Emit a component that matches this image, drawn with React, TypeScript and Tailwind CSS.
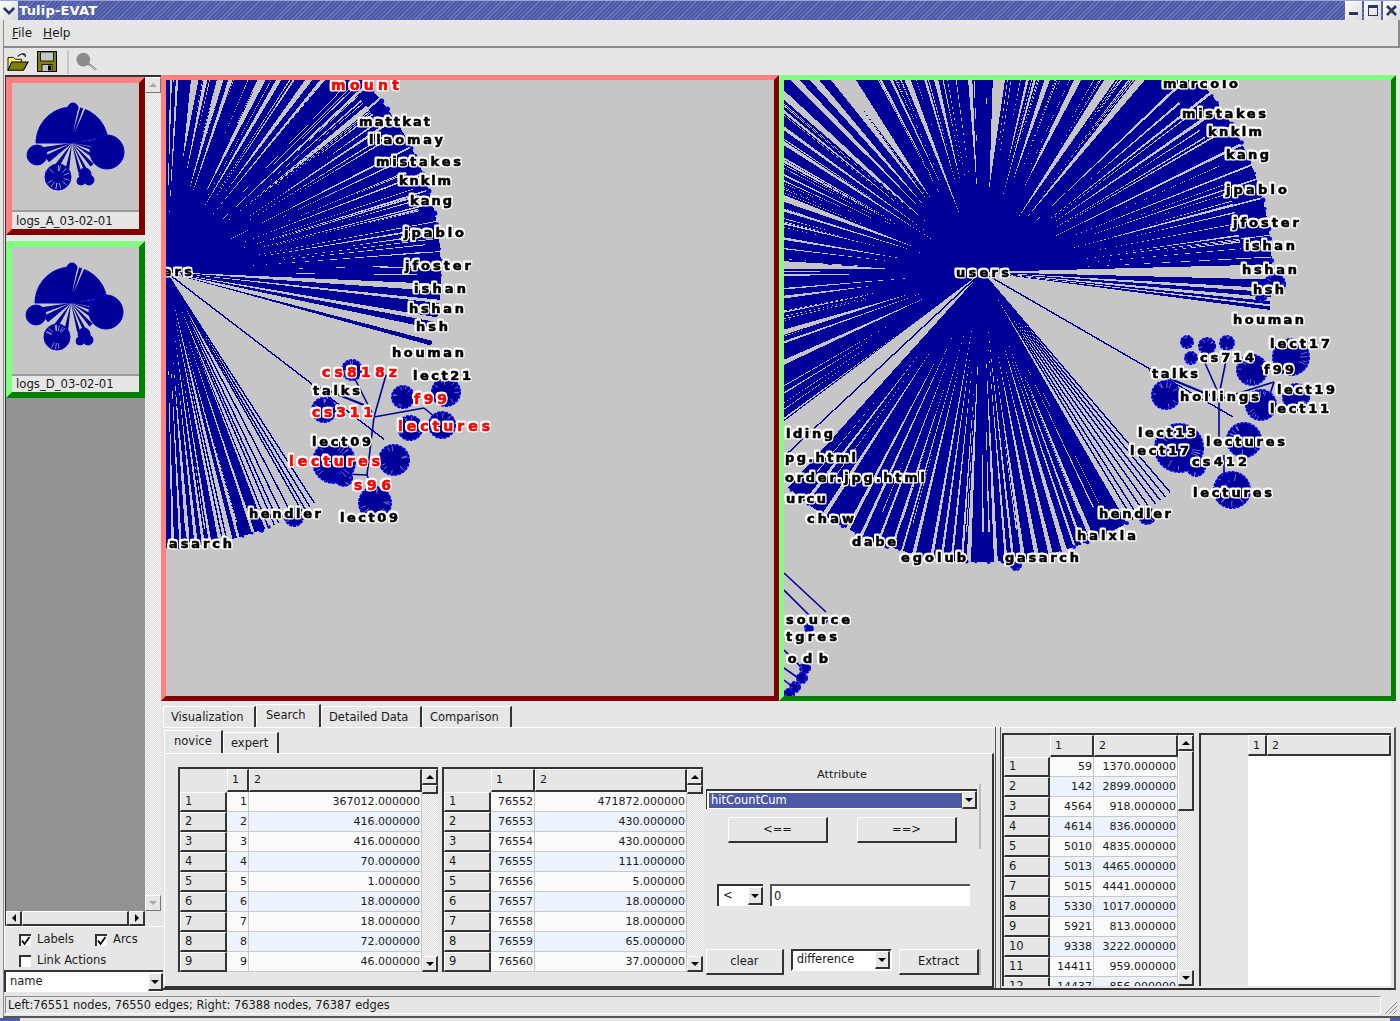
import React from "react";

const BLUE = "#000099";
const BG = "#c6c6c6";

function rng(seed: number) {
  return () => {
    seed |= 0;
    seed = (seed + 0x6d2b79f5) | 0;
    let t = Math.imul(seed ^ (seed >>> 15), 1 | seed);
    t = (t + Math.imul(t ^ (t >>> 7), 61 | t)) ^ t;
    return ((t ^ (t >>> 14)) >>> 0) / 4294967296;
  };
}

const rad = (d: number) => (d * Math.PI) / 180;
const pol = (cx: number, cy: number, a: number, r: number) => `${(cx + Math.cos(rad(a)) * r).toFixed(1)} ${(cy + Math.sin(rad(a)) * r).toFixed(1)}`;

function wedgePath(cx: number, cy: number, a0: number, a1: number, r: (a: number) => number) {
  let d = `M${cx} ${cy}`;
  for (let a = a0; a < a1; a += 2) d += `L${pol(cx, cy, a, r(a))}`;
  d += `L${pol(cx, cy, a1, r(a1))}Z`;
  return d;
}

function sliverPath(cx: number, cy: number, tx: number, ty: number, w: number, r0: number) {
  const dist = Math.hypot(tx - cx, ty - cy);
  const a = (Math.atan2(ty - cy, tx - cx) * 180) / Math.PI;
  const h = (Math.atan(w / 2 / dist) * 180) / Math.PI;
  const R = dist + 60;
  return `M${pol(cx, cy, a, r0)}L${pol(cx, cy, a - h, R)}L${pol(cx, cy, a + h, R)}Z`;
}

type Label = [string, number, number, number, boolean?];
type Blob = [number, number, number];
type Seg = [number, number, number, number, number?];

function Labels({ items }: { items: Label[] }) {
  return (
    <g className="[filter:drop-shadow(1.6px_0_0_#fff)_drop-shadow(-1.6px_0_0_#fff)_drop-shadow(0_1.6px_0_#fff)_drop-shadow(0_-1.6px_0_#fff)]">
      {items.map(([t, x0, x1, y, red], i) => (
        <text
          key={i}
          x={x0}
          y={y}
          textLength={x1 - x0}
          lengthAdjust="spacing"
          fontSize={red ? 14 : 13}
          fontWeight={700}
          stroke={red ? "#ff0000" : "#000000"}
          strokeWidth={0.6}
          fill={red ? "#ff0000" : "#000000"}
          className="font-['DejaVu_Sans',sans-serif]"
        >
          {t}
        </text>
      ))}
    </g>
  );
}

function Blobs({ items, seed }: { items: Blob[]; seed: number }) {
  const r = rng(seed);
  let spokes = "";
  items.forEach(([x, y, rr]) => {
    const n = Math.round(rr * 0.6);
    for (let i = 0; i < n; i++) {
      const a = r() * 360;
      spokes += `M${pol(x, y, a, rr * (0.5 + r() * 0.25))}L${pol(x, y, a, rr * 0.92)}`;
    }
  });
  return (
    <g>
      {items.map(([x, y, rr], i) => (
        <circle key={i} cx={x} cy={y} r={rr} fill={BLUE} stroke="#0000e0" strokeWidth={2} strokeDasharray="3 1" />
      ))}
      <path d={spokes} stroke="#8e8ee0" strokeWidth={0.8} fill="none" />
    </g>
  );
}

function Segs({ items }: { items: Seg[] }) {
  return (
    <g>
      {items.map(([a, b, c, d, w], i) => (
        <line key={i} x1={a} y1={b} x2={c} y2={d} stroke={BLUE} strokeWidth={w ?? 1.6} />
      ))}
    </g>
  );
}

function Fan(props: {
  cx: number;
  cy: number;
  seed: number;
  wedges: [number, number][];
  rim: (a: number) => number;
  slivers: [number, number, number][];
  fine: [number, number, number][];
  singles: number[];
}) {
  const { cx, cy, seed, wedges, rim, slivers, fine, singles } = props;
  const r = rng(seed);
  const blue = wedges.map(([a, b]) => wedgePath(cx, cy, a, b, rim)).join("");
  let gray = slivers.map(([x, y, w]) => sliverPath(cx, cy, x, y, w, 55 + r() * 60)).join("");
  fine.forEach(([a, b, n]) => {
    for (let i = 0; i < n; i++) {
      const an = a + r() * (b - a);
      gray += sliverPath(cx, cy, cx + Math.cos(rad(an)) * 200, cy + Math.sin(rad(an)) * 200, 0.4 + r() * 1.1, 80 + r() * 120);
    }
  });
  const lines = singles.map((a) => `M${cx} ${cy}L${pol(cx, cy, a, rim(a))}`).join("");
  const dots: [number, number, number][] = [];
  wedges.forEach(([a, b]) => {
    if (b - a < 4) return;
    for (let an = a; an < b; an += 1.6 + r() * 1.6) {
      const R = rim(an);
      dots.push([cx + Math.cos(rad(an)) * R, cy + Math.sin(rad(an)) * R, 1 + r() * 1.8]);
    }
  });
  return (
    <g>
      <path d={blue} fill={BLUE} shapeRendering="crispEdges" />
      <path d={gray} fill={BG} shapeRendering="crispEdges" />
      <path d={lines} stroke={BLUE} strokeWidth={1.4} fill="none" shapeRendering="crispEdges" />
      {dots.map(([x, y, d], i) => (
        <circle key={i} cx={x} cy={y} r={d} fill="#0000d0" />
      ))}
    </g>
  );
}

const z9 = (l: number[][]) => l.map(([x, y, w]) => [983 + (x - 568) / 2.8, 272 + (y - 590) / 3, w / 2.8] as [number, number, number]);
const z8 = (l: number[][]) => l.map(([x, y, w]) => [780 + x / 3, 420 + y / 3, w / 3] as [number, number, number]);
const z10 = (l: number[][]) => l.map(([x, y, w]) => [163 + x / 3, 75 + y / 3, w / 3] as [number, number, number]);

const rightSlivers = [
  ...z9([
    [45, 15, 20], [100, 15, 22], [160, 15, 25], [195, 15, 40], [285, 15, 8], [315, 15, 8], [360, 15, 18], [410, 15, 8], [440, 15, 14], [535, 15, 14], [615, 15, 40], [695, 15, 10], [715, 15, 8], [750, 15, 18], [835, 15, 22], [925, 15, 28], [1010, 15, 22],
    [1100, 50, 8], [1170, 85, 8], [1190, 130, 10], [1240, 170, 6], [1290, 210, 8], [1320, 270, 6], [1340, 310, 5], [1345, 370, 5], [1355, 430, 3], [1370, 480, 3], [1380, 545, 3],
    [15, 60, 20], [15, 110, 8], [15, 160, 10], [15, 205, 10], [15, 250, 6], [15, 300, 6], [15, 370, 20], [15, 405, 8], [15, 445, 6], [15, 490, 8], [15, 520, 4], [15, 570, 26], [15, 600, 6], [15, 640, 5], [15, 665, 10], [15, 710, 5], [15, 770, 16], [15, 800, 6], [15, 860, 14],
  ]),
  ...z8([
    [85, 240, 12], [145, 270, 14], [210, 320, 12], [250, 340, 10], [300, 360, 8], [340, 380, 8], [370, 390, 6], [405, 400, 12], [460, 400, 10], [490, 400, 8], [520, 405, 8], [550, 410, 8], [570, 410, 14], [650, 410, 12], [680, 405, 8], [700, 400, 8], [730, 395, 12], [770, 390, 14], [810, 380, 14], [850, 370, 16], [880, 360, 8], [900, 345, 8], [930, 335, 14],
  ]),
];

const leftSlivers = [
  ...z10([
    [27, 15, 6], [45, 15, 8], [98, 15, 30], [130, 15, 14], [175, 15, 20], [205, 15, 14], [300, 15, 22], [350, 15, 15], [395, 15, 6], [440, 15, 20], [480, 15, 10],
    [560, 80, 8], [600, 115, 7], [650, 165, 5], [700, 240, 6], [770, 300, 6], [800, 345, 5], [810, 385, 5], [820, 440, 3], [830, 490, 3], [830, 530, 3], [830, 570, 2], [830, 600, 2],
  ]),
  [268, 530, 3], [255, 535, 3], [240, 540, 3], [226, 545, 3], [212, 548, 3], [205, 549, 3], [198, 552, 4], [190, 552, 3], [182, 553, 3], [174, 554, 3],
] as [number, number, number][];

const leftLabels: Label[] = [
  ["mount", 332, 400, 90, true], ["mattkat", 360, 431, 126], ["llaomay", 370, 444, 144], ["mistakes", 377, 462, 166], ["knklm", 400, 452, 185], ["kang", 411, 453, 205], ["jpablo", 405, 465, 237], ["jfoster", 406, 472, 270], ["ishan", 415, 467, 293], ["hshan", 410, 465, 313], ["hsh", 417, 449, 331], ["houman", 393, 465, 357],
  ["users", 140, 193, 276],
  ["cs818z", 323, 398, 377, true], ["lect21", 414, 472, 380], ["talks", 314, 361, 395], ["f99", 415, 448, 404, true], ["cs311", 313, 374, 417, true], ["lectures", 399, 491, 431, true], ["lect09", 313, 372, 446], ["lectures", 290, 381, 466, true], ["s96", 355, 392, 490, true], ["hendler", 250, 322, 518], ["lect09", 341, 399, 522], ["asarch", 170, 233, 548],
];

const rightLabels: Label[] = [
  ["marcolo", 1164, 1239, 88], ["mistakes", 1183, 1267, 118], ["knklm", 1209, 1263, 136], ["kang", 1227, 1270, 159], ["jpablo", 1227, 1288, 194], ["jfoster", 1234, 1300, 227], ["ishan", 1246, 1296, 250], ["hshan", 1243, 1298, 274], ["hsh", 1254, 1285, 294], ["houman", 1234, 1305, 324], ["users", 957, 1010, 277],
  ["lect17", 1271, 1331, 348], ["cs714", 1201, 1255, 362], ["talks", 1153, 1199, 378], ["f99", 1265, 1295, 374], ["lect19", 1278, 1336, 394], ["hollings", 1181, 1260, 401], ["lect11", 1271, 1330, 413], ["lect13", 1139, 1197, 437], ["lectures", 1207, 1286, 446], ["lect17", 1131, 1190, 455], ["cs412", 1193, 1248, 466], ["lectures", 1194, 1273, 497], ["hendler", 1100, 1172, 518], ["halxla", 1078, 1137, 540], ["gasarch", 1006, 1080, 562], ["egolub", 902, 967, 562], ["dabe", 853, 897, 546], ["chaw", 808, 855, 523], ["urcu", 787, 827, 503], ["order.jpg.html", 786, 926, 482], ["pg.html", 786, 857, 462], ["lding", 787, 834, 438], ["source", 787, 851, 624], ["tgres", 787, 838, 641], ["podb", 773, 829, 663],
];

function LeftGraph() {
  return (
    <svg viewBox="167 80 608 616" className="block w-[608px] h-[616px] bg-[#c6c6c6]">
      <Fan
        cx={167}
        cy={272}
        seed={7}
        rim={() => 275}
        wedges={[[-100, 2.5], [4, 5.8], [6.5, 9.5], [10.5, 12], [14.5, 15.5], [68, 76], [79, 92]]}
        slivers={leftSlivers}
        fine={[[-90, 2, 55], [68, 92, 10]]}
        singles={[37.5, 57.3, 58.5, 59.6, 60.4, 62.6, 64.4, 65.8, 66.8, 77.2, 78.1, 93, 95]}
      />
      <Segs items={[[315, 385, 365, 405, 2.2], [353, 373, 375, 417], [387, 375, 375, 417], [375, 417, 425, 408], [425, 408, 448, 427], [375, 417, 368, 475], [322, 473, 368, 475], [368, 475, 376, 495]]} />
      <Blobs seed={3} items={[[353, 370, 10], [404, 397, 11], [447, 392, 14], [411, 428, 12], [443, 425, 13], [325, 410, 12], [335, 462, 21], [345, 478, 8], [395, 460, 15], [376, 503, 16], [295, 517, 9]]} />
      <Labels items={leftLabels} />
    </svg>
  );
}

function RightGraph() {
  return (
    <svg viewBox="785 80 607 616" className="block w-[607px] h-[616px] bg-[#c6c6c6]">
      <Fan
        cx={983}
        cy={272}
        seed={11}
        rim={() => 290}
        wedges={[[-180, -1.5], [1.5, 3.2], [4, 5], [5.8, 6.4], [6.8, 7.5], [60, 132], [143, 180]]}
        slivers={rightSlivers}
        fine={[[-180, -2, 100], [60, 132, 14], [143, 180, 12]]}
        singles={[30, 49.5, 50.8, 52, 53.2, 54.6, 56, 57.4, 58.6, 137]}
      />
      <Segs items={[[1150, 370, 1215, 397, 2.4], [1206, 363, 1218, 390], [1228, 356, 1221, 390], [1218, 400, 1275, 382], [1275, 382, 1270, 397], [1220, 400, 1220, 440], [1225, 455, 1225, 478], [785, 573, 827, 612], [785, 590, 815, 620], [785, 650, 805, 670], [785, 668, 802, 680], [785, 680, 795, 688]]} />
      <Blobs seed={5} items={[[1188, 342, 6], [1208, 346, 8], [1228, 343, 7], [1192, 358, 6], [1253, 370, 15], [1292, 357, 18], [1297, 397, 13], [1262, 405, 15], [1167, 395, 14], [1180, 448, 24], [1197, 467, 9], [1245, 440, 17], [1233, 490, 18], [1225, 480, 6], [1148, 516, 8], [1017, 565, 5], [1276, 284, 10], [1262, 297, 5], [810, 628, 4], [825, 620, 3], [806, 668, 5], [803, 678, 5], [796, 687, 5], [790, 694, 5]]} />
      <Labels items={rightLabels} />
    </svg>
  );
}

function Thumb({ cy, dy, cx }: { cy: number; dy: number; cx: number }) {
  const spokes = [[-8, 10], [12, 20], [28, 36], [44, 52], [60, 66], [72, 78], [96, 104], [118, 128], [140, 155], [160, 172]];
  const d = spokes.map(([a, b]) => wedgePath(cx, cy, a, b, () => 30)).join("");
  const lighter = `M${pol(cx, cy, -84, 10)}L${pol(cx, cy, -80, 37)}L${pol(cx, cy, -77, 37)}ZM${pol(cx, cy, -76, 10)}L${pol(cx, cy, -72, 37)}L${pol(cx, cy, -69, 37)}Z`;
  const r = rng(cx + cy);
  let sp = "";
  for (let i = 0; i < 12; i++) {
    const a = r() * 360;
    sp += `M${pol(cx - 14, cy + 34, a, 6)}L${pol(cx - 14, cy + 34, a, 12)}`;
  }
  return (
    <svg viewBox={`12 ${83 + dy} 127 127`} className="block w-[127px] h-[127px] bg-[#c6c6c6]">
      <path d={wedgePath(cx, cy, -180, -10, () => 36)} fill={BLUE} stroke="#0000c8" strokeWidth={1} />
      <path d={d} fill={BLUE} />
      <path d={lighter} fill={BG} />
      <g fill={BLUE} stroke="#0000d0" strokeWidth={1}>
        <circle cx={cx + 35} cy={cy + 9} r={17} />
        <circle cx={cx - 35} cy={cy + 12} r={10} />
        <circle cx={cx - 14} cy={cy + 34} r={13} />
        <circle cx={cx + 13} cy={cy + 31} r={6} />
        <circle cx={cx + 17} cy={cy + 37} r={5} />
        <circle cx={cx + 9} cy={cy + 38} r={4} />
        <circle cx={cx + 1} cy={cy - 35} r={5} />
        <circle cx={cx + 47} cy={cy + 16} r={3} />
      </g>
      <path d={sp} stroke="#b0b0e0" strokeWidth={0.8} fill="none" />
    </svg>
  );
}

const Tri = ({ dir = "down", color = "#000" }: { dir?: "up" | "down" | "left" | "right"; color?: string }) => {
  const pts = { up: "0,5 8,5 4,1", down: "0,1 8,1 4,5", left: "5,0 5,8 1,4", right: "1,0 1,8 5,4" }[dir];
  const vb = dir === "up" || dir === "down" ? "0 0 8 6" : "0 0 6 8";
  const cls = dir === "up" || dir === "down" ? "w-[8px] h-[6px]" : "w-[6px] h-[8px]";
  return (
    <svg viewBox={vb} className={cls}>
      <polygon points={pts} fill={color} />
    </svg>
  );
};

const raised = "bg-[#e6e6e6] border-t border-l border-b-2 border-r-2 border-t-white border-l-white border-b-[#333333] border-r-[#333333]";
const soft = "bg-[#e6e6e6] border-t border-l border-b border-r border-t-white border-l-white border-b-[#777777] border-r-[#777777]";
const dither = "bg-[repeating-conic-gradient(#dcdcdc_0_25%,#f6f6f6_0_50%)] bg-[length:2px_2px]";

function Scroll({ thumb }: { thumb: number }) {
  const off = thumb === 0;
  return (
    <div className={`w-[16px] flex flex-col ${dither}`}>
      <div className={`${off ? soft : raised} flex items-center justify-center shrink-0 h-[16px]`}>
        <Tri dir="up" color={off ? "#a8a8a8" : "#000"} />
      </div>
      {!off && <div className={`${raised} shrink-0`} style={{ height: thumb }} />}
      <div className="flex-1" />
      <div className={`${off ? soft : raised} flex items-center justify-center shrink-0 h-[16px]`}>
        <Tri color={off ? "#a8a8a8" : "#000"} />
      </div>
    </div>
  );
}

function Table(p: { w0: number; w1: number; w2: number; h: number; rows: [string, string][]; head: number; thumb: number }) {
  return (
    <div className="flex border-t-2 border-l-2 border-[#333333] overflow-hidden shrink-0" style={{ height: p.h }}>
      <div className="flex flex-col bg-[#e6e6e6] overflow-hidden">
        <div className="flex shrink-0" style={{ height: p.head }}>
          <div className="bg-[#e6e6e6]" style={{ width: p.w0 }} />
          <div className={`${raised} pl-1 leading-[20px] text-[11px]`} style={{ width: p.w1 }}>1</div>
          <div className={`${raised} pl-1 leading-[20px] text-[11px]`} style={{ width: p.w2 }}>2</div>
        </div>
        {p.rows.map(([a, b], i) => (
          <div key={i} className="flex h-[20px] shrink-0 text-[11px]">
            <div className={`${raised} pl-1 leading-[17px] text-[11.5px]`} style={{ width: p.w0 }}>{i + 1}</div>
            <div className={`border-r border-b border-[#c8c8c8] pr-[1px] text-right leading-[19px] ${i % 2 ? "bg-[#ecf3fe]" : "bg-[#fafafa]"}`} style={{ width: p.w1 }}>{a}</div>
            <div className={`border-r border-b border-[#c8c8c8] pr-[1px] text-right leading-[19px] ${i % 2 ? "bg-[#ecf3fe]" : "bg-[#fafafa]"}`} style={{ width: p.w2 }}>{b}</div>
          </div>
        ))}
      </div>
      <Scroll thumb={p.thumb} />
    </div>
  );
}

const t1: [string, string][] = [["1", "367012.000000"], ["2", "416.000000"], ["3", "416.000000"], ["4", "70.000000"], ["5", "1.000000"], ["6", "18.000000"], ["7", "18.000000"], ["8", "72.000000"], ["9", "46.000000"]];
const t2: [string, string][] = [["76552", "471872.000000"], ["76553", "430.000000"], ["76554", "430.000000"], ["76555", "111.000000"], ["76556", "5.000000"], ["76557", "18.000000"], ["76558", "18.000000"], ["76559", "65.000000"], ["76560", "37.000000"]];
const t3: [string, string][] = [["59", "1370.000000"], ["142", "2899.000000"], ["4564", "918.000000"], ["4614", "836.000000"], ["5010", "4835.000000"], ["5013", "4465.000000"], ["5015", "4441.000000"], ["5330", "1017.000000"], ["5921", "813.000000"], ["9338", "3222.000000"], ["14411", "959.000000"], ["14437", "856.000000"]];

const ComboBtn = () => (
  <div className={`${raised} w-[15px] h-[18px] flex items-center justify-center shrink-0`}>
    <Tri />
  </div>
);

function Check({ on }: { on: boolean }) {
  return (
    <div className="w-[12px] h-[12px] bg-white border-t-2 border-l-2 border-[#333333] shrink-0 flex items-center justify-center">
      {on && (
        <svg viewBox="0 0 10 10" className="w-[10px] h-[10px]">
          <path d="M1 4.5 L3.5 8 L8.5 1" stroke="#000" strokeWidth={1.8} fill="none" />
        </svg>
      )}
    </div>
  );
}

function FolderIcon() {
  return (
    <svg viewBox="0 0 24 22" className="w-[22px] h-[20px]">
      <path d="M1 6 L7 6 L9 8 L16 8 L16 10 L1 20Z" fill="#ffff66" stroke="#000" strokeWidth={1} />
      <path d="M1 20 L5 11 L23 11 L18 20Z" fill="#808000" stroke="#000" strokeWidth={1.2} />
      <path d="M12 5 C14 1.5 18 1.5 20 3 M20 3 L17.5 3 M20 3 L20 5.5" stroke="#000" strokeWidth={1.2} fill="none" />
    </svg>
  );
}

function DiskIcon() {
  return (
    <svg viewBox="0 0 20 21" className="w-[20px] h-[21px]">
      <rect x="0.5" y="0.5" width="19" height="20" fill="#808000" stroke="#000" />
      <rect x="3.5" y="1" width="13" height="9" fill="#c6c6c6" stroke="#000" strokeWidth={0.8} />
      <rect x="5" y="13.5" width="10" height="7" fill="#c6c6c6" stroke="#000" strokeWidth={0.8} />
      <rect x="11" y="14.5" width="3" height="5" fill="#000" />
    </svg>
  );
}

function LensIcon() {
  return (
    <svg viewBox="0 0 24 20" className="w-[22px] h-[19px]">
      <circle cx="8" cy="8" r="7.5" fill="#8c8c8c" />
      <path d="M13 12 L22 19" stroke="#8c8c8c" strokeWidth={2.4} />
      <path d="M15 14 L22 19" stroke="#c8c8c8" strokeWidth={1} />
    </svg>
  );
}

const WinBtn = ({ children }: { children: React.ReactNode }) => (
  <div className="w-[17px] h-[19px] ml-[2px] bg-[linear-gradient(135deg,#ffffff,#d8d8d8)] flex items-center justify-center">{children}</div>
);

const Tab = ({ label, w, on }: { label: string; w: number; on?: boolean }) => (
  <div className={`flex items-center border-t border-l border-r-2 border-t-white border-l-white border-r-[#333333] bg-[#e6e6e6] ${on ? "h-[23px] pl-[9px]" : "h-[21px] pt-[2px] pl-[7px]"}`} style={{ width: w }}>
    {label}
  </div>
);

export default function App() {
  return (
    <div className="w-[1400px] h-[1021px] overflow-hidden flex flex-col bg-[#e6e6e6] font-['DejaVu_Sans',sans-serif] text-[11.5px] text-[#1a1a1a]">
      {/* Title bar */}
      <div className="h-[20px] flex items-center shrink-0 bg-[repeating-linear-gradient(135deg,#6b76bb_0_1px,#4d5aa6_1px_3px)] border-t border-[#9aa3d8]">
        <div className="w-[18px] h-[19px] bg-[linear-gradient(135deg,#ffffff,#d8d8d8)] flex items-center justify-center shrink-0">
          <svg viewBox="0 0 14 9" className="w-[12px] h-[8px]">
            <path d="M1 1 L7 7 L13 1" stroke="#2c3566" strokeWidth={3} fill="none" />
          </svg>
        </div>
        <div className="pl-[1px] text-white font-bold text-[13px] tracking-[0.2px]">Tulip-EVAT</div>
        <div className="flex-1" />
        <WinBtn><div className="w-[9px] h-[3px] mt-[5px] bg-[#2c3566]" /></WinBtn>
        <WinBtn><div className="w-[10px] h-[11px] border border-t-[3px] border-[#2c3566]" /></WinBtn>
        <WinBtn>
          <svg viewBox="0 0 11 11" className="w-[11px] h-[11px]"><path d="M1 1 L10 10 M10 1 L1 10" stroke="#2c3566" strokeWidth={2.6} /></svg>
        </WinBtn>
      </div>
      {/* Menu */}
      <div className="h-[28px] shrink-0 flex items-center border-b-2 border-[#8c8c8c] pl-[8px] gap-[11px] border-r-2 border-r-[#8c8c8c] border-l border-l-[#8c8c8c] ml-[3px] text-[12px]">
        <span><span className="underline">F</span>ile</span>
        <span><span className="underline">H</span>elp</span>
      </div>
      {/* Toolbar */}
      <div className="h-[27px] shrink-0 flex items-center ml-[3px] border-l border-[#8c8c8c] pl-[3px]">
        <FolderIcon />
        <div className="w-[8px]" />
        <DiskIcon />
        <div className="w-[10px]" />
        <div className="w-[2px] h-[24px] bg-[#c8c8c8]" />
        <div className="w-[7px]" />
        <LensIcon />
      </div>
      {/* Body */}
      <div className="h-[918px] shrink-0 flex">
        {/* Left column */}
        <div className="w-[162px] shrink-0 flex flex-col ml-[3px] border-l border-[#8c8c8c] pl-[1px] -mr-[4px] pr-[2px]">
          <div className="h-[851px] shrink-0 flex flex-col border-l border-t-2 border-[#333333]">
            <div className="flex-1 flex min-h-0">
              <div className="w-[139px] flex flex-col bg-[#929292]">
                <div className="bg-[#e6e6e6] pb-[6px]">
                  <div className="border-[6px] border-t-[#ff8080] border-l-[#ff8080] border-b-[#800000] border-r-[#800000]">
                    <Thumb cx={72} cy={143} dy={0} />
                    <div className="h-[19px] border-t-2 border-[#9a9a9a] pl-[4px] leading-[18px] text-[11.7px] bg-[#e6e6e6]">logs_A_03-02-01</div>
                  </div>
                </div>
                <div className="border-[6px] border-t-[#80ff80] border-l-[#80ff80] border-b-[#008000] border-r-[#008000]">
                  <Thumb cx={71} cy={303} dy={164} />
                  <div className="h-[18px] border-t-2 border-[#9a9a9a] pl-[4px] leading-[17px] text-[11.7px] bg-[#e6e6e6]">logs_D_03-02-01</div>
                </div>
              </div>
              <Scroll thumb={0} />
            </div>
            <div className="h-[15px] shrink-0 flex w-[139px]">
              <div className={`${raised} w-[16px] flex items-center justify-center`}><Tri dir="left" /></div>
              <div className={`${raised} flex-1`} />
              <div className={`${raised} w-[16px] flex items-center justify-center`}><Tri dir="right" /></div>
            </div>
          </div>
          <div className="h-[44px] shrink-0 -ml-[1px] pt-[5px] border-t border-l border-white">
            <div className="flex items-center h-[15px] pl-[14px]">
              <Check on />
              <span className="ml-[6px]">Labels</span>
              <span className="ml-[21px]"><Check on /></span>
              <span className="ml-[6px]">Arcs</span>
            </div>
            <div className="flex items-center h-[15px] pl-[14px] mt-[6px]">
              <Check on={false} />
              <span className="ml-[6px]">Link Actions</span>
            </div>
          </div>
          <div className="h-[22px] shrink-0 -ml-[1px] bg-white border-t-2 border-l-2 border-[#333333] flex items-center pl-[4px]">
            <span className="flex-1">name</span>
            <ComboBtn />
          </div>
        </div>
        {/* Right column */}
        <div className="w-[1235px] shrink-0 flex flex-col">
          <div className="flex h-[626px] shrink-0">
            <div className="border-[5px] border-t-[#ff8080] border-l-[#ff8080] border-b-[#800000] border-r-[#800000]">
              <LeftGraph />
            </div>
            <div className="border-[5px] border-t-[#80ff80] border-l-[#80ff80] border-b-[#008000] border-r-[#008000]">
              <RightGraph />
            </div>
          </div>
          {/* Tabs */}
          <div className="h-[26px] shrink-0 flex items-end pl-[2px]">
            <Tab label="Visualization" w={93} />
            <Tab label="Search" w={65} on />
            <Tab label="Detailed Data" w={101} />
            <Tab label="Comparison" w={90} />
          </div>
          <div className="h-[263px] shrink-0 flex ml-[2px] border-t border-white border-b-2 border-b-[#333333] border-r-2 border-r-[#555555]">
            {/* Left pane */}
            <div className="w-[831px] shrink-0 flex flex-col pl-[1px]">
              <div className="h-[25px] shrink-0 flex items-end">
                <Tab label="novice" w={59} on />
                <Tab label="expert" w={56} />
              </div>
              <div className="flex-1 flex border-t border-l border-white border-r-2 border-r-[#333333] border-b-2 border-b-[#333333] pl-[13px] pt-[13px]">
                <Table w0={47} w1={22} w2={173} h={205} rows={t1} head={23} thumb={9} />
                <div className="w-[4px] shrink-0" />
                <Table w0={47} w1={44} w2={152} h={205} rows={t2} head={23} thumb={9} />
                <div className="w-[3px] shrink-0" />
                <div className="w-[275px] shrink-0 flex flex-col">
                  <div className="h-[16px] text-center leading-[16px] pr-[3px] text-[11.3px]">Attribute</div>
                  <div className="mt-[1px] h-[65px] border-r-2 border-[#bdbdbd] pr-[2px] pt-[5px]">
                    <div className="h-[20px] border-t-2 border-l border-[#333333] bg-white flex items-center pl-[2px]">
                      <div className="flex-1 h-[15px] bg-[#4c5aa6] text-white leading-[15px] pl-[2px] outline-1 outline-dotted outline-white">hitCountCum</div>
                      <ComboBtn />
                    </div>
                    <div className="flex mt-[8px] pl-[22px] gap-[29px]">
                      <div className={`${raised} w-[100px] h-[26px] flex items-center justify-center`}>&lt;==</div>
                      <div className={`${raised} w-[100px] h-[26px] flex items-center justify-center`}>==&gt;</div>
                    </div>
                  </div>
                  <div className="flex mt-[35px] pl-[11px] gap-[7px]">
                    <div className="w-[46px] h-[22px] bg-white border-t-2 border-l-2 border-[#333333] flex items-center pl-[4px]">
                      <span className="flex-1">&lt;</span>
                      <ComboBtn />
                    </div>
                    <div className="w-[200px] h-[22px] bg-white border-t-2 border-l-2 border-[#555555] leading-[20px] pl-[2px]">0</div>
                  </div>
                  <div className="flex mt-[43px] gap-[7px] border-r-2 border-[#bdbdbd] h-[26px]">
                    <div className={`${raised} w-[78px] flex items-center justify-center`}>clear</div>
                    <div className="w-[102px] h-[22px] bg-white border-2 border-[#333333] border-b-white border-r-white flex items-center pl-[4px]">
                      <span className="flex-1">difference</span>
                      <ComboBtn />
                    </div>
                    <div className={`${raised} w-[80px] flex items-center justify-center`}>Extract</div>
                  </div>
                </div>
              </div>
            </div>
            <div className="w-[6px] shrink-0 border-r border-l border-[#555555] mx-[1px] -mt-[1px]" />
            {/* table 3 */}
            <div className="pt-[5px]">
              <Table w0={46} w1={44} w2={84} h={253} rows={t3} head={22} thumb={60} />
            </div>
            <div className="w-[5px] shrink-0" />
            {/* table 4 */}
            <div className="pt-[5px]">
              <div className="h-[253px] w-[192px] border-t-2 border-l-2 border-[#333333] flex flex-col bg-white">
                <div className="flex h-[21px] shrink-0 text-[11px]">
                  <div className="w-[47px] bg-[#e6e6e6]" />
                  <div className={`${raised} w-[19px] pl-1 leading-[19px]`}>1</div>
                  <div className={`${raised} flex-1 pl-1 leading-[19px]`}>2</div>
                </div>
                <div className="flex-1 flex">
                  <div className="w-[47px] bg-[#e6e6e6]" />
                  <div className="flex-1" />
                </div>
              </div>
            </div>
          </div>
        </div>
      </div>
      {/* Status */}
      <div className="h-[25px] shrink-0 ml-[3px] border-l border-[#8c8c8c] flex items-end pl-[1px] pr-[3px] pb-[2px] border-b-2 border-b-[#555555]">
        <div className="h-[18px] flex-1 border border-t-[#8c8c8c] border-l-[#8c8c8c] border-b-white border-r-white leading-[16px] pl-[2px] text-[11.4px]">Left:76551 nodes, 76550 edges; Right: 76388 nodes, 76387 edges</div>
        <svg viewBox="0 0 14 14" className="w-[14px] h-[14px] ml-[2px]">
          <path d="M14 2 L2 14 M14 6 L6 14 M14 10 L10 14" stroke="#8c8c8c" strokeWidth={1} />
        </svg>
      </div>
      <div className="h-[3px] shrink-0 flex justify-between">
        <div className="w-[20px] bg-[#4d5aa6]" />
        <div className="w-[10px] bg-[#4d5aa6]" />
      </div>
    </div>
  );
}
